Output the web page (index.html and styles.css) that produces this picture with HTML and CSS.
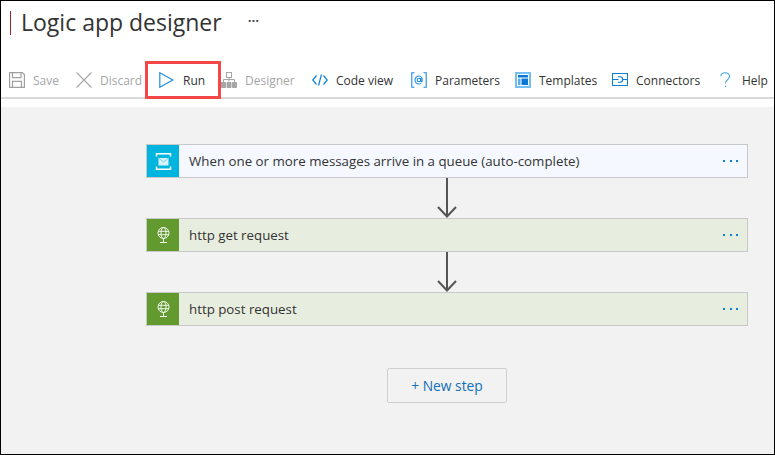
FILE: index.html
```html
<!DOCTYPE html>
<html lang="en">
<head>
<meta charset="utf-8">
<title>Logic app designer</title>
<link rel="stylesheet" href="styles.css">
</head>
<body>
<div class="frame">
  <header class="head">
    <div class="title-row">
      <span class="title-bar"></span>
      <h1 class="title">Logic app designer</h1>
      <span class="title-more">···</span>
    </div>
    <nav class="toolbar">
      <div class="tool tool-save is-off">
        <svg class="icon" viewBox="0 0 16 16" fill="none" stroke="#a0a0a0" stroke-width="1.2"><path d="M.6.6h12.800l2 2v12.800H.6z"/><path d="M3.500.6v5h8.500v-5M3.500 15.400v-6h9v6"/></svg>
        <span>Save</span>
      </div>
      <div class="tool tool-discard is-off">
        <svg class="icon" viewBox="0 0 16 16" fill="none" stroke="#a6a6a6" stroke-width="1.1"><path d="M.5.5l15 15M15.500.5l-15 15"/></svg>
        <span>Discard</span>
      </div>
      <div class="tool tool-run">
        <svg class="icon" viewBox="0 0 16 16" fill="none" stroke="#1c8ce0" stroke-width="1.200"><path d="M.8.800v14.400L13.800 8z"/></svg>
        <span>Run</span>
      </div>
      <div class="tool tool-designer is-off">
        <svg class="icon" viewBox="0 0 16 16" fill="none" stroke="#a6a6a6"><rect x="5.500" y=".5" width="5" height="5"/><path d="M8 5.500v4M2.500 10V7.500h11V10"/><path d="M.5 10.500h4v5h-4zM6 10.500h4v5H6zM11.500 10.500h4v5h-4z" fill="#a6a6a6"/></svg>
        <span>Designer</span>
      </div>
      <div class="tool tool-code">
        <svg class="icon" viewBox="0 0 16 16" fill="none" stroke="#0f7fd6" stroke-width="1.200"><path d="M4.500 3.500L.8 8l3.700 4.500M11.500 3.500L15.200 8l-3.700 4.500M9.500 2.500L6.500 13.500"/></svg>
        <span>Code view</span>
      </div>
      <div class="tool tool-params">
        <svg class="icon" viewBox="0 0 16 16" fill="none" stroke="#1c8ce0" stroke-width="1.100"><path d="M3.500.8H.8v14.400h2.700M12.500.8h2.700v14.400h-2.700"/><circle cx="8" cy="8" r="1.800"/><path d="M9.800 6v3c0 1 1.500 1 1.500-.5C11.300 6 10 4 8 4S4 5.800 4 8s1.800 4 4 4c1 0 1.700-.2 2.300-.6"/></svg>
        <span>Parameters</span>
      </div>
      <div class="tool tool-templates">
        <svg class="icon" viewBox="0 0 16 16"><rect width="16" height="16" fill="#74c0f2"/><rect x="2" y="2" width="12" height="12" fill="#fff"/><path d="M3 3h10v2.500H3z" fill="#0a78d4"/><path d="M3 6.500h2.500V13H3z" fill="#5aaeea"/><path d="M6.500 6.500H13V13H6.500z" fill="#0a78d4"/></svg>
        <span>Templates</span>
      </div>
      <div class="tool tool-connectors">
        <svg class="icon" viewBox="0 0 16 16" fill="none" stroke="#0f7fd6" stroke-width="1.100"><path d="M.5 1.500h15v12H.5zM.5 7.500h6M10.500 7.500h5"/><path d="M6 4.800h2a2.700 2.700 0 0 1 0 5.400H6"/></svg>
        <span>Connectors</span>
      </div>
      <div class="tool tool-help">
        <svg class="icon icon-help" viewBox="0 0 12 18" fill="none" stroke="#3b9de6" stroke-width="1.100"><path d="M1 5c0-2.500 2-4 4.500-4S10.500 2.500 10.500 5c0 3.500-4.500 3.500-4.500 7.500"/><path d="M5.300 16h1.400" stroke-width="1.400"/></svg>
        <span>Help</span>
      </div>
    </nav>
    <div class="run-mark"></div>
  </header>
  <main class="canvas">
    <section class="card card-queue">
      <div class="card-icon icon-queue">
        <svg viewBox="0 0 17 17" width="17" height="17" fill="none" stroke="#fff" stroke-width="1.500"><path d="M1.500 3.500V.8h14v2.700M1.500 13.500v2.700h14v-2.700"/><rect x="3.500" y="5" width="10" height="7.500" fill="#d6f2fb" stroke="none"/><path d="M3.500 5l5 4 5-4" stroke="#7fd6ee" stroke-width="1"/></svg>
      </div>
      <div class="card-name">When one or more messages arrive in a queue (auto-complete)</div>
      <div class="card-more"><i></i><i></i><i></i></div>
    </section>
    <div class="arrow">
      <svg viewBox="0 0 20 40" width="20" height="40" fill="none" stroke="#555" stroke-width="2"><path d="M10 0v38.500M1 29l9 9.500 9-9.500"/></svg>
    </div>
    <section class="card card-http">
      <div class="card-icon icon-http">
        <svg viewBox="0 0 13 16" width="13" height="16" fill="none" stroke="#f2f6ec" stroke-width="1"><circle cx="6.500" cy="6" r="5.500"/><ellipse cx="6.500" cy="6" rx="2.500" ry="5.500"/><path d="M1 4.300h11M1 7.700h11M6.500 11.500v4M3 15.500h7"/></svg>
      </div>
      <div class="card-name">http get request</div>
      <div class="card-more"><i></i><i></i><i></i></div>
    </section>
    <div class="arrow">
      <svg viewBox="0 0 20 40" width="20" height="40" fill="none" stroke="#555" stroke-width="2"><path d="M10 0v38.500M1 29l9 9.500 9-9.500"/></svg>
    </div>
    <section class="card card-http">
      <div class="card-icon icon-http">
        <svg viewBox="0 0 13 16" width="13" height="16" fill="none" stroke="#f2f6ec" stroke-width="1"><circle cx="6.500" cy="6" r="5.500"/><ellipse cx="6.500" cy="6" rx="2.500" ry="5.500"/><path d="M1 4.300h11M1 7.700h11M6.500 11.500v4M3 15.500h7"/></svg>
      </div>
      <div class="card-name">http post request</div>
      <div class="card-more"><i></i><i></i><i></i></div>
    </section>
    <button class="new-step" type="button">+ New step</button>
  </main>
</div>
</body>
</html>
```
FILE: styles.css
```css
* { box-sizing: border-box; }
html, body { margin: 0; padding: 0; }
body {
  width: 775px;
  height: 455px;
  overflow: hidden;
  font-family: "Open Sans", "Noto Sans", "Liberation Sans", sans-serif;
  background: #fff;
}
.frame {
  width: 775px;
  height: 455px;
  border: 1px solid #000;
  display: flex;
  flex-direction: column;
}
.head {
  position: relative;
  height: 96px;
  background: #fff;
  display: flex;
  flex-direction: column;
  flex: none;
}
.title-row {
  height: 41px;
  display: flex;
  align-items: center;
  padding-left: 9px;
}
.title-bar {
  width: 1px;
  height: 24px;
  background: #a4262c;
  margin-right: 10px;
  position: relative;
  top: 1px;
}
.title {
  margin: 0;
  font-size: 23px;
  font-weight: 400;
  color: #333;
}
.title-more {
  margin-left: 26px;
  font-size: 14px;
  font-weight: 600;
  color: #444;
  position: relative;
  top: -1px;
}
.toolbar {
  display: flex;
  align-items: center;
  height: 28px;
  margin-top: 24px;
  padding-left: 8px;
  font-size: 12px;
  color: #333;
  white-space: nowrap;
}
.tool { display: flex; align-items: center; gap: 8px; flex: none; }
.tool.is-off { color: #a6a6a6; }
.icon { width: 16px; height: 16px; flex: none; }
.icon-help { width: 11px; height: 18px; }
.tool-save { width: 67px; }
.tool-discard { width: 83px; }
.tool-run { width: 62px; gap: 8px; }
.tool-designer { width: 91px; }
.tool-code { width: 99px; }
.tool-params { width: 104px; }
.tool-templates { width: 97px; }
.tool-connectors { width: 108px; }
.tool-help { gap: 11px; }
.run-mark {
  position: absolute;
  left: 144px;
  top: 60px;
  width: 76px;
  height: 38px;
  border: 3px solid #f44848;
  z-index: 2;
}
.canvas {
  flex: 1;
  background: linear-gradient(#fff 0, #fff 8px, #f2f2f2 8px);
  border-top: 2px solid #d9d9d9;
  display: flex;
  flex-direction: column;
  align-items: flex-start;
  padding: 45px 0 0 145px;
}
.card {
  width: 602px;
  height: 34px;
  border: 1px solid #c8c8c8;
  display: flex;
  align-items: center;
  flex: none;
}
.card-queue { background: #f5f8ff; }
.card-http { background: #e8eedf; }
.card-icon {
  width: 32px;
  height: 32px;
  flex: none;
  display: flex;
  align-items: center;
  justify-content: center;
}
.icon-queue { background: #00b4e0; }
.icon-http { background: #629a30; }
.card-name {
  flex: 1;
  margin-left: 10px;
  font-size: 13.300px;
  color: #333;
  white-space: nowrap;
}
.card-more {
  display: flex;
  gap: 4.500px;
  margin-right: 9px;
}
.card-more i {
  display: block;
  width: 2px;
  height: 2px;
  background: #0f7fd6;
}
.arrow {
  width: 602px;
  height: 40px;
  display: flex;
  justify-content: center;
  flex: none;
}
.new-step {
  align-self: flex-start;
  margin: 42px 0 0 241px;
  width: 120px;
  height: 35px;
  background: #f2f2f2;
  border: 1px solid #cfcfcf;
  border-radius: 2px;
  font-family: inherit;
  font-size: 13.800px;
  color: #0f6fb8;
  padding: 0;
}
```
